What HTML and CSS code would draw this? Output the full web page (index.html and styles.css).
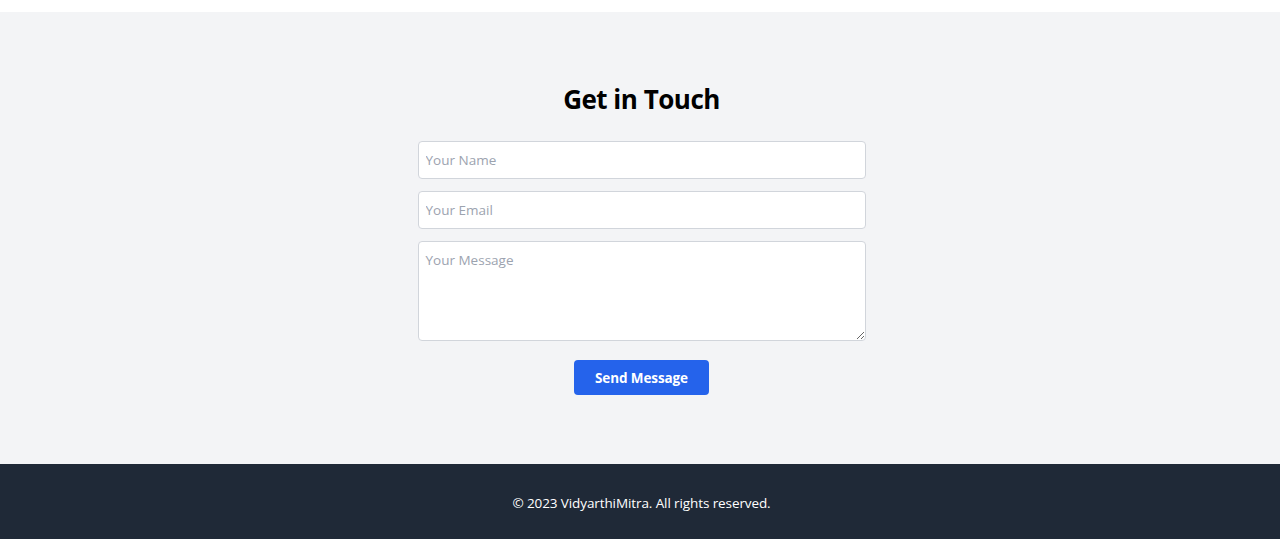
FILE: index.html
```html
<!DOCTYPE html>
<html lang="en">
<head>
<meta charset="utf-8">
<title>Contact</title>
<link rel="stylesheet" href="styles.css">
</head>
<body>
<div class="topbar"></div>
<section class="contact">
  <h2 class="title">Get in Touch</h2>
  <form class="form">
    <input class="field" type="text" placeholder="Your Name">
    <input class="field" type="email" placeholder="Your Email">
    <textarea class="field area" rows="4" placeholder="Your Message"></textarea>
    <div class="actions"><button class="btn" type="button">Send Message</button></div>
  </form>
</section>
<footer class="footer">
  <p class="copy">© 2023 VidyarthiMitra. All rights reserved.</p>
</footer>
</body>
</html>
```
FILE: styles.css
```css
* { box-sizing: border-box; }
html, body { margin: 0; padding: 0; }
body {
  font-family: "Open Sans", "Noto Sans", sans-serif;
  background: #ffffff;
  color: #111827;
}
.topbar { height: 12px; background: #ffffff; }
.contact {
  background: #f3f4f6;
  padding: 68px 16px 69px 19px;
  display: flex;
  flex-direction: column;
  align-items: center;
}
.title {
  margin: 1px 0 24px;
  font-size: 26px;
  line-height: 36px;
  font-weight: 700;
  color: #000;
  letter-spacing: -0.5px;
}
.form {
  width: 448px;
  display: flex;
  flex-direction: column;
  gap: 12px;
}
.field {
  display: block;
  width: 100%;
  height: 38px;
  padding: 8px 7px;
  font-family: inherit;
  font-size: 13.5px;
  line-height: 20px;
  border: 1px solid #d1d5db;
  border-radius: 4px;
  background: #fff;
  color: #111827;
  outline: none;
}
.field::placeholder { color: #9ca3af; }
.area { height: 100px; resize: vertical; }
.actions { display: flex; justify-content: center; margin-top: 7px; }
.btn {
  width: 135px;
  height: 35px;
  border: none;
  border-radius: 4px;
  background: #2563eb;
  color: #fff;
  font-family: inherit;
  font-size: 13.5px;
  font-weight: 700;
  letter-spacing: -0.1px;
  cursor: pointer;
}
.footer {
  background: #1f2937;
  height: 75px;
  padding: 29px 0 0 3px;
  text-align: center;
}
.copy {
  margin: 0;
  color: #fff;
  font-size: 13.5px;
  line-height: 20px;
  letter-spacing: -0.1px;
}
```
